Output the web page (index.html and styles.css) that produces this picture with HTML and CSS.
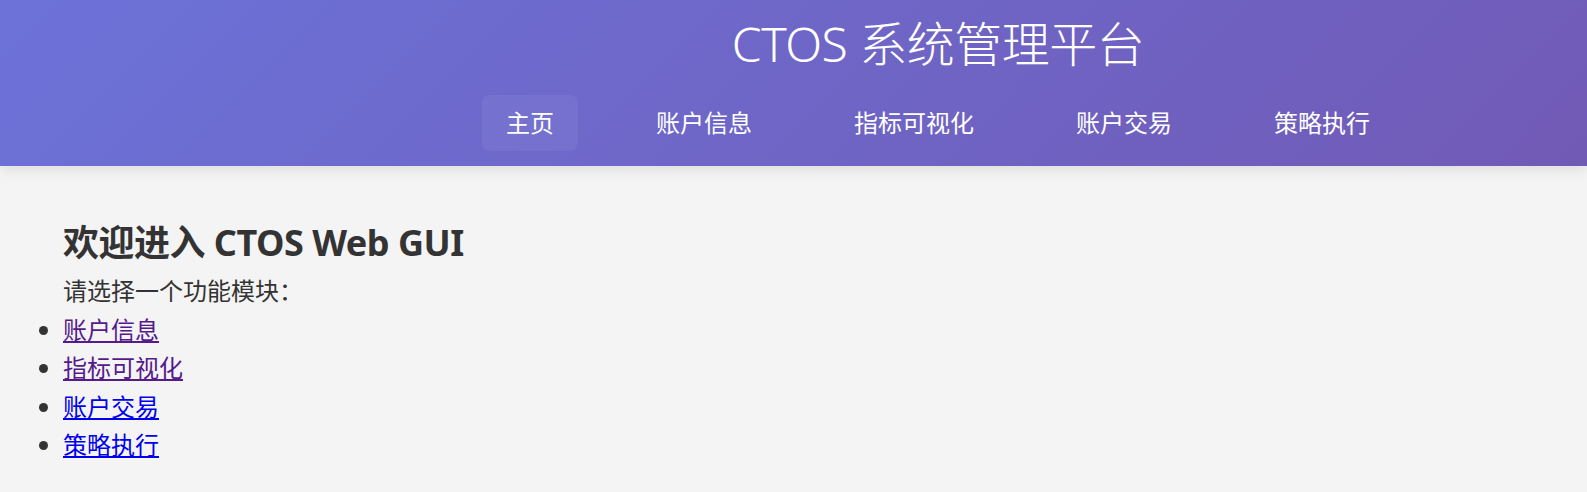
FILE: index.html
```html
<!DOCTYPE html>
<html lang="zh-CN">
<head>
<meta charset="utf-8">
<title>CTOS 系统管理平台</title>
<link rel="stylesheet" href="styles.css">
</head>
<body>
<header class="site-header">
  <h1 class="site-title">CTOS 系统管理平台</h1>
  <nav class="main-nav">
    <a class="nav-item active" href="#">主页</a>
    <a class="nav-item" href="#">账户信息</a>
    <a class="nav-item" href="#">指标可视化</a>
    <a class="nav-item" href="#">账户交易</a>
    <a class="nav-item" href="#">策略执行</a>
  </nav>
</header>
<main class="content">
  <h2 class="welcome">欢迎进入 CTOS Web GUI</h2>
  <p class="intro">请选择一个功能模块：</p>
  <ul class="module-list">
    <li><a class="visited" href="#">账户信息</a></li>
    <li><a class="visited" href="#">指标可视化</a></li>
    <li><a class="unvisited" href="#">账户交易</a></li>
    <li><a class="unvisited" href="#">策略执行</a></li>
  </ul>
</main>
</body>
</html>
```
FILE: styles.css
```css
html, body {
  margin: 0;
  padding: 0;
}
body {
  background: #f4f4f4;
  color: #333;
  font-family: "Noto Sans", "Noto Sans CJK SC", sans-serif;
  font-size: 24px;
}
.site-header {
  height: 166px;
  box-sizing: border-box;
  padding: 13px 0 0 289px;
  display: flex;
  flex-direction: column;
  align-items: center;
  background: linear-gradient(135deg, #6c72d8 0%, #715ab6 100%);
  box-shadow: 0 3px 14px rgba(0, 0, 0, 0.1);
  color: #fff;
}
.site-title {
  margin: 0;
  font-size: 48px;
  font-weight: 300;
  line-height: 62px;
  letter-spacing: -0.5px;
}
.main-nav {
  margin-top: 20px;
  display: flex;
  gap: 54px;
}
.nav-item {
  color: #fff;
  text-decoration: none;
  font-size: 24px;
  line-height: 32px;
  padding: 12px 24px;
  border-radius: 8px;
}
.nav-item.active {
  background: rgba(255, 255, 255, 0.06);
}
.content {
  padding: 55px 0 0 63px;
}
.welcome {
  margin: 0;
  font-size: 36px;
  font-weight: 700;
  line-height: 43px;
  letter-spacing: -0.5px;
  color: #333;
}
.intro {
  margin: 8px 0 0;
  line-height: 38.5px;
}
.module-list {
  margin: 0;
  padding: 0;
  line-height: 38.5px;
}
.module-list a.visited {
  color: #551a8b;
}
.module-list a.unvisited {
  color: #0000ee;
}
```
